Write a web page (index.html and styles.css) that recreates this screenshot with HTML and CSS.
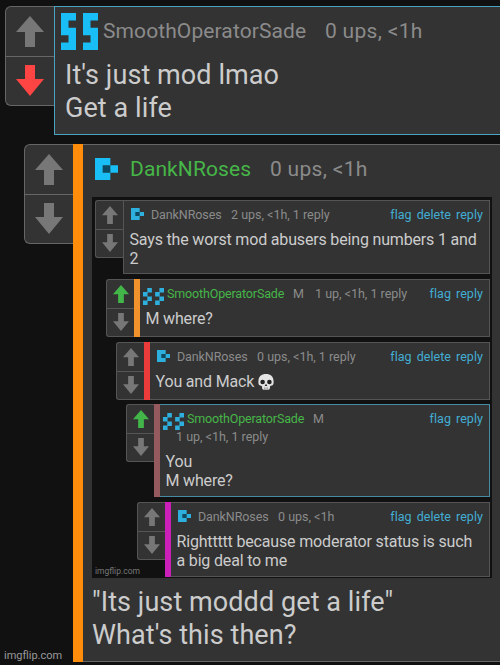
FILE: index.html
```
<!DOCTYPE html>
<html lang="en">
<head>
    <meta charset="UTF-8">
    <meta name="viewport" content="width=device-width, initial-scale=1.0">
    <title>Comments</title>
    <link rel="stylesheet" href="styles.css">
</head>
<body>
    <!-- Shared icons -->
    <svg class="icon-defs" width="0" height="0">
        <symbol id="up" viewBox="0 0 28 31" preserveAspectRatio="none"><path d="M14 0L28 16H19V31H9V16H0Z"/></symbol>
        <symbol id="down" viewBox="0 0 28 31" preserveAspectRatio="none"><path d="M9 0H19V14H28L14 31L0 14H9Z"/></symbol>
        <symbol id="dank" viewBox="0 0 3 3" preserveAspectRatio="none"><path fill="#0b4a61" d="M1 1H2V2H1Z"/><path d="M0 0H2V1H1V2H2V3H0ZM2 1H3V2H2Z"/></symbol>
        <symbol id="smooth" viewBox="0 0 37 37" preserveAspectRatio="none"><path d="M0 0H15V7.4H7.5V14.8H15V37H0V29.6H7.5V22.2H0ZM22 0H37V7.4H29.5V14.8H37V37H22V29.6H29.5V22.2H22Z"/></symbol>
        <symbol id="smooth-small" viewBox="0 0 64 50" preserveAspectRatio="none"><path d="M13 0H27V13H13ZM0 12H14V25H0ZM13 25H27V38H13ZM0 37H14V50H0ZM50 0H64V13H50ZM37 12H51V25H37ZM50 25H64V38H50ZM37 37H51V50H37Z"/></symbol>
    </svg>

    <div class="page">
        <!-- First comment -->
        <div class="comment comment-top">
            <div class="votes">
                <div class="vote"><svg class="arrow"><use href="#up"/></svg></div>
                <div class="vote"><svg class="arrow red"><use href="#down"/></svg></div>
            </div>
            <div class="box selected">
                <div class="head">
                    <svg class="avatar avatar-smooth"><use href="#smooth"/></svg>
                    <span class="name">SmoothOperatorSade</span>
                    <span class="meta">0 ups, &lt;1h</span>
                </div>
                <div class="text">It's just mod lmao<br>Get a life</div>
            </div>
        </div>

        <!-- Second comment -->
        <div class="comment comment-main">
            <div class="votes">
                <div class="vote"><svg class="arrow"><use href="#up"/></svg></div>
                <div class="vote"><svg class="arrow"><use href="#down"/></svg></div>
            </div>
            <div class="bar orange"></div>
            <div class="box">
                <div class="head">
                    <svg class="avatar avatar-dank"><use href="#dank"/></svg>
                    <span class="name green">DankNRoses</span>
                    <span class="meta">0 ups, &lt;1h</span>
                </div>

                <div class="thread">
                    <div class="reply reply-1">
                        <div class="votes">
                            <div class="vote"><svg class="arrow"><use href="#up"/></svg></div>
                            <div class="vote"><svg class="arrow"><use href="#down"/></svg></div>
                        </div>
                        <div class="box">
                            <div class="head">
                                <svg class="avatar avatar-dank"><use href="#dank"/></svg>
                                <span class="name">DankNRoses</span>
                                <span class="meta">2 ups, &lt;1h, 1 reply</span>
                                <span class="links"><a>flag</a><a>delete</a><a>reply</a></span>
                            </div>
                            <div class="text">Says the worst mod abusers being numbers 1 and<br>2</div>
                        </div>
                    </div>

                    <div class="reply reply-2">
                        <div class="votes">
                            <div class="vote"><svg class="arrow up"><use href="#up"/></svg></div>
                            <div class="vote"><svg class="arrow"><use href="#down"/></svg></div>
                        </div>
                        <div class="bar orange"></div>
                        <div class="box">
                            <div class="head">
                                <svg class="avatar avatar-smooth"><use href="#smooth-small"/></svg>
                                <span class="name green">SmoothOperatorSade</span>
                                <span class="mod">M</span>
                                <span class="meta">1 up, &lt;1h, 1 reply</span>
                                <span class="links"><a>flag</a><a>reply</a></span>
                            </div>
                            <div class="text">M where?</div>
                        </div>
                    </div>

                    <div class="reply reply-3">
                        <div class="votes">
                            <div class="vote"><svg class="arrow"><use href="#up"/></svg></div>
                            <div class="vote"><svg class="arrow"><use href="#down"/></svg></div>
                        </div>
                        <div class="bar crimson"></div>
                        <div class="box">
                            <div class="head">
                                <svg class="avatar avatar-dank"><use href="#dank"/></svg>
                                <span class="name">DankNRoses</span>
                                <span class="meta">0 ups, &lt;1h, 1 reply</span>
                                <span class="links"><a>flag</a><a>delete</a><a>reply</a></span>
                            </div>
                            <div class="text">You and Mack <svg class="skull" viewBox="0 0 16 16"><path fill="#e4e4e4" d="M8 0C3.5 0 .5 2.700.5 6.500C.2 8.500.3 10.500 1.500 11.300L3.800 12.100L4.300 14.800Q4.600 15.800 6 15.800H10Q11.400 15.800 11.700 14.800L12.200 12.100L14.500 11.300C15.700 10.500 15.800 8.500 15.500 6.500C15.500 2.700 12.500 0 8 0Z"/><ellipse cx="4.600" cy="8" rx="2.300" ry="2.300" fill="#222"/><ellipse cx="11.400" cy="8" rx="2.300" ry="2.300" fill="#222"/><path fill="#222" d="M8 9.700L6.700 11.900H9.300Z"/><path stroke="#777" stroke-width=".6" d="M6.500 13.300V15.600M8 13.300V15.600M9.500 13.300V15.600"/></svg></div>
                        </div>
                    </div>

                    <div class="reply reply-4">
                        <div class="votes">
                            <div class="vote"><svg class="arrow up"><use href="#up"/></svg></div>
                            <div class="vote"><svg class="arrow"><use href="#down"/></svg></div>
                        </div>
                        <div class="bar rose"></div>
                        <div class="box selected">
                            <div class="head">
                                <svg class="avatar avatar-smooth"><use href="#smooth-small"/></svg>
                                <span class="name green">SmoothOperatorSade</span>
                                <span class="mod">M</span>
                                <span class="links"><a>flag</a><a>reply</a></span>
                            </div>
                            <div class="subhead"><span class="meta">1 up, &lt;1h, 1 reply</span></div>
                            <div class="text">You<br>M where?</div>
                        </div>
                    </div>

                    <div class="reply reply-5">
                        <div class="votes">
                            <div class="vote"><svg class="arrow"><use href="#up"/></svg></div>
                            <div class="vote"><svg class="arrow"><use href="#down"/></svg></div>
                        </div>
                        <div class="bar magenta"></div>
                        <div class="box">
                            <div class="head">
                                <svg class="avatar avatar-dank"><use href="#dank"/></svg>
                                <span class="name">DankNRoses</span>
                                <span class="meta">0 ups, &lt;1h</span>
                                <span class="links"><a>flag</a><a>delete</a><a>reply</a></span>
                            </div>
                            <div class="text">Righttttt because moderator status is such<br>a big deal to me</div>
                        </div>
                    </div>
                    <span class="watermark watermark-small">imgflip.com</span>
                </div>

                <div class="text closing">"Its just moddd get a life"<br>What's this then?</div>
            </div>
        </div>
        <span class="watermark">imgflip.com</span>
    </div>
</body>
</html>
```

FILE: styles.css
```
* {
    box-sizing: border-box;
}
body {
    margin: 0;
    background-color: #111;
    font-family: Roboto, sans-serif;
    color: #ccc;
}
.icon-defs {
    position: absolute;
}
.page {
    position: relative;
    width: 500px;
    height: 665px;
    padding-top: 6px;
    overflow: hidden;
    white-space: nowrap;
}
.comment, .reply {
    display: flex;
    align-items: flex-start;
}
.box {
    flex: 1;
    min-width: 0;
    height: 100%;
    background-color: #333;
    border: 1px solid #666;
}
.comment .box {
    border-right: none;
}
.box.selected {
    border-color: #4ba3c3;
}

/* Vote buttons */
.votes {
    display: flex;
    flex-direction: column;
    width: 49px;
    height: 100px;
    background-color: #333;
    border: 1px solid #666;
    border-right: none;
    border-radius: 6px 0 0 6px;
}
.vote {
    display: flex;
    flex: 1;
    align-items: center;
    justify-content: center;
}
.vote + .vote {
    border-top: 1px solid #666;
}
.arrow {
    width: 28px;
    height: 31px;
    fill: #777;
}
.arrow.red {
    fill: #ff4444;
}
.arrow.up {
    fill: #43b649;
}

/* Coloured depth bars */
.bar {
    width: 10px;
    height: 100%;
}
.orange {
    background-color: #ff8c0a;
}
.crimson {
    background-color: #ec3b3b;
}
.rose {
    background-color: #955a5d;
}
.magenta {
    background-color: #cb1fba;
}

.head {
    display: flex;
    align-items: center;
    height: 49px;
    font-size: 21px;
    line-height: 49px;
    letter-spacing: 0.1px;
    color: #8b8b8b;
}
.comment > .box > .head > .meta {
    letter-spacing: 0.3px;
}
.avatar {
    flex: none;
    fill: #18bef5;
}
.green {
    color: #46b648;
}
.text {
    font-size: 27px;
    line-height: 33px;
    letter-spacing: 0.08px;
}

.comment-top {
    height: 129px;
    padding-left: 5px;
}
.comment-top .avatar {
    width: 37px;
    height: 37px;
    margin-left: 6px;
}
.comment-top .name {
    width: 222px;
    margin-left: 5px;
}
.comment-top .text {
    padding: 3px 0 0 10px;
}

.comment-main {
    height: 518px;
    margin-top: 9px;
    padding-left: 24px;
}
.comment-main > .box {
    border-left: none;
}
.comment-main > .box > .head {
    height: 48px;
    line-height: 48px;
}
.comment-main > .box > .head .avatar {
    width: 23px;
    height: 22px;
    margin-left: 12px;
}
.comment-main > .box > .head .name {
    width: 140px;
    margin-left: 12px;
}
.closing {
    padding: 8px 0 0 9px;
}

/* Nested thread */
.thread {
    position: relative;
    width: 400px;
    height: 381px;
    margin: 4px 0 0 9px;
    padding: 3px 2px 0 3px;
    background-color: #111;
}
.thread .box {
    border: 1px solid #555;
}
.thread .bar + .box {
    border-left: none;
}
.thread .box.selected {
    border-color: #468ba3;
}
.thread .votes {
    width: 28px;
    height: 58px;
    border-color: #555;
    border-radius: 3px 0 0 3px;
}
.thread .vote + .vote {
    border-color: #555;
}
.thread .arrow {
    width: 16px;
    height: 18px;
}
.thread .bar {
    width: 6px;
}
.thread .orange {
    background-color: #f2922c;
}
.thread .head {
    height: 26px;
    padding-right: 6px;
    font-size: 12.5px;
    line-height: 27px;
    letter-spacing: 0;
}
.thread .text {
    padding: 3px 0 0 5.5px;
    font-size: 16px;
    line-height: 19px;
    letter-spacing: -0.17px;
}
.thread .avatar {
    fill: #2eb0df;
}
.thread .avatar-dank {
    width: 13px;
    height: 12px;
    margin-left: 7px;
}
.thread .avatar-dank + .name {
    width: 80px;
    margin-left: 7px;
    letter-spacing: -0.1px;
}
.thread .avatar-smooth {
    width: 21px;
    height: 17px;
    margin-left: 3px;
    align-self: flex-end;
    margin-bottom: 1px;
}
.thread .avatar-smooth + .name {
    width: 126px;
    margin-left: 3px;
    letter-spacing: -0.15px;
}
.mod {
    width: 22px;
}
.links {
    display: flex;
    gap: 5px;
    margin-left: auto;
    letter-spacing: 0.05px;
    color: #42aed4;
}
.reply-1 {
    height: 74px;
}
.reply-2 {
    height: 58px;
    margin: 5px 0 0 11px;
}
.reply-3 {
    height: 58px;
    margin: 5px 0 0 21px;
}
.reply-4 {
    height: 93px;
    margin: 4px 0 0 31px;
}
.reply-5 {
    height: 75px;
    margin: 5px 0 0 42px;
}
.subhead {
    height: 18px;
    padding-left: 16px;
    font-size: 12.5px;
    line-height: 12px;
    color: #8b8b8b;
}
.skull {
    width: 16px;
    height: 16px;
    vertical-align: -3px;
}

.watermark {
    position: absolute;
    left: 4px;
    bottom: 2px;
    font-size: 11px;
    line-height: 14px;
    color: #999;
}
.watermark-small {
    left: 3px;
    bottom: 0;
    font-size: 8.5px;
    color: #777;
}
```
